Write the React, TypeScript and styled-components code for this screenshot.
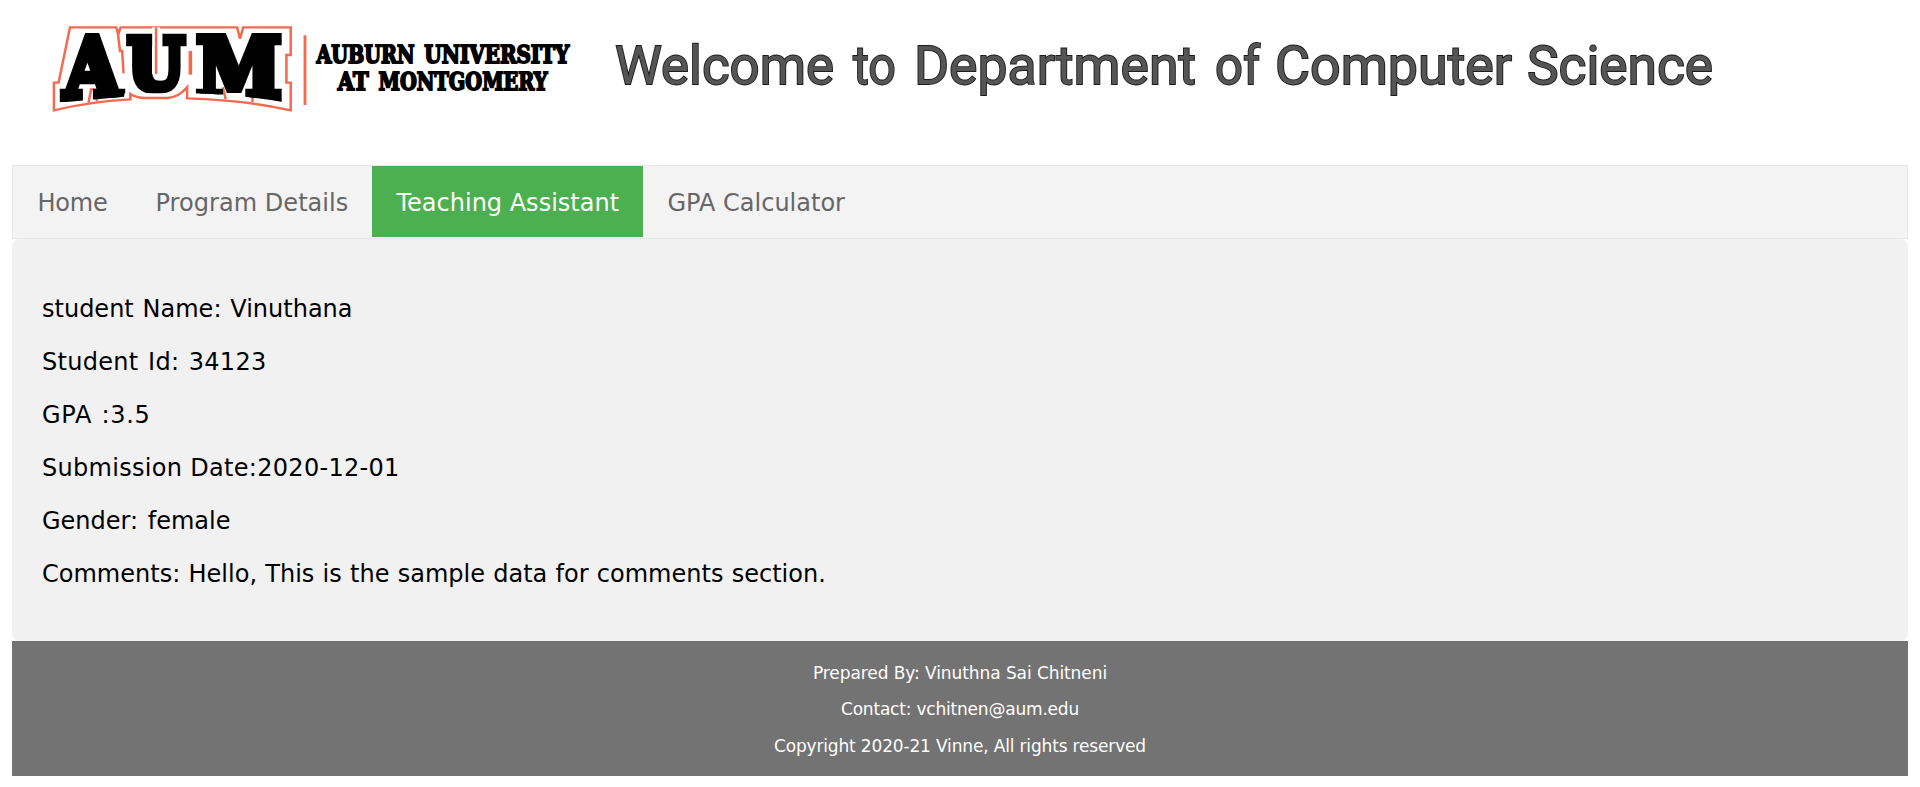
import React from "react";
import styled, { createGlobalStyle } from "styled-components";

const GlobalStyle = createGlobalStyle`
  * { box-sizing: border-box; }
  body {
    margin: 0;
    background: #fff;
    font-family: Verdana, "DejaVu Sans", sans-serif;
    overflow: hidden;
  }
`;

const Page = styled.div`
  width: 100%;
  height: 787px;
  padding: 0 12px;
`;

const Header = styled.header`
  display: flex;
  height: 165px;
  padding-left: 18px;
`;

const Nav = styled.nav`
  display: flex;
  height: 74px;
  background: #f3f3f3;
  border: 1px solid #e7e7e7;
`;

const NavItem = styled.a<{ $active?: boolean; $width: number; $spacing?: number }>`
  width: ${(p) => p.$width}px;
  height: 71px;
  padding-left: 24.5px;
  line-height: 74px;
  font-size: 24px;
  letter-spacing: ${(p) => p.$spacing ?? 0}px;
  white-space: nowrap;
  color: ${(p) => (p.$active ? "#fff" : "#666")};
  background: ${(p) => (p.$active ? "#4caf50" : "transparent")};
`;

const Panel = styled.main`
  height: 402px;
  padding: 44px 30px 0;
  border-radius: 7px;
  background: #f1f1f1;
`;

const Detail = styled.p<{ $spacing: number; $wordSpacing?: number }>`
  margin: 0;
  height: 53px;
  line-height: 53px;
  font-size: 24px;
  letter-spacing: ${(p) => p.$spacing}px;
  word-spacing: ${(p) => p.$wordSpacing ?? 0}px;
  color: #000;
  white-space: pre;
`;

const Footer = styled.footer`
  height: 135px;
  padding-top: 13.7px;
  background: #737373;
  text-align: center;
`;

const FooterLine = styled.p<{ $spacing: number }>`
  margin: 0;
  height: 36.5px;
  line-height: 36.5px;
  font-size: 17px;
  letter-spacing: ${(p) => p.$spacing}px;
  color: #fff;
`;

const slab = { fontFamily: "DejaVu Serif", fontWeight: 700 };

const Logo = () => (
  <svg width="560" height="140" viewBox="0 0 1568 420" preserveAspectRatio="none">
    <clipPath id="arch">
      <path d="M60 99H720V308Q600 284 450 280H265L263 290L80 308Z" />
    </clipPath>
    <g fill="none" stroke="#f4694f" strokeWidth="7">
      <path d="M112 82H241L248 100L254 82H580L588 116L597 82H730V165H718V248H730V331Q600 300 440 295V262Q415 293 385 294H318Q295 292 281 282V298Q165 305 67 331V248H80Z" />
      <path d="M245 90L252 153H258L262 220M164 308L171 268H180L188 304M540 262L548 298M630 250L622 306" />
      <path d="M449 153V224" strokeWidth="10" />
      <path d="M770 106V315" strokeWidth="8" />
    </g>
    <g fill="#000" stroke="#000" strokeWidth="25" style={slab} clipPath="url(#arch)">
      <text x="95" y="295" fontSize="251" textLength="159" lengthAdjust="spacingAndGlyphs">A</text>
      <text x="274" y="266" fontSize="210" textLength="158" lengthAdjust="spacingAndGlyphs">U</text>
      <text x="466" y="295" fontSize="251" textLength="238" lengthAdjust="spacingAndGlyphs">M</text>
    </g>
    <path d="M353 82V222" stroke="#fff" strokeWidth="22" />
    <path d="M353 82V222" stroke="#f4694f" strokeWidth="7" />
    <g fill="#000" stroke="#000" strokeWidth="5.5" fontSize="70" style={slab}>
      <text x="802" y="188" textLength="275" lengthAdjust="spacingAndGlyphs">AUBURN</text>
      <text x="1104" y="188" textLength="406" lengthAdjust="spacingAndGlyphs">UNIVERSITY</text>
      <text x="862" y="271" textLength="86" lengthAdjust="spacingAndGlyphs">AT</text>
      <text x="976" y="271" textLength="473" lengthAdjust="spacingAndGlyphs">MONTGOMERY</text>
    </g>
  </svg>
);

const titleWords: [string, number, number][] = [
  ["Welcome", 25, 219],
  ["to", 263, 43],
  ["Department", 324, 282],
  ["of", 625, 45],
  ["Computer", 685, 237],
  ["Science", 937, 186],
];

const Title = () => (
  <svg width="1150" height="140" viewBox="0 0 1150 140">
    <g
      fill="#555"
      stroke="#1c1c1c"
      strokeWidth="1.8"
      paintOrder="stroke"
      fontFamily="Roboto"
      fontWeight="400"
      fontSize="53"
    >
      {titleWords.map(([word, x, width]) => (
        <text key={word} x={x} y="83.5" textLength={width} lengthAdjust="spacingAndGlyphs">
          {word}
        </text>
      ))}
    </g>
  </svg>
);

export default function App() {
  return (
    <Page>
      <GlobalStyle />
      <Header>
        <Logo />
        <Title />
      </Header>
      <Nav>
        <NavItem $width={118} $spacing={-0.2}>Home</NavItem>
        <NavItem $width={241} $spacing={0.05}>Program Details</NavItem>
        <NavItem $width={271} $active>Teaching Assistant</NavItem>
        <NavItem $width={226}>GPA Calculator</NavItem>
      </Nav>
      <Panel>
        <Detail $spacing={0} $wordSpacing={1.2}>student Name: Vinuthana</Detail>
        <Detail $spacing={0.3} $wordSpacing={1.5}>Student Id: 34123</Detail>
        <Detail $spacing={0.7} $wordSpacing={1}>GPA :3.5</Detail>
        <Detail $spacing={0.3}>Submission Date:2020-12-01</Detail>
        <Detail $spacing={0} $wordSpacing={2}>Gender: female</Detail>
        <Detail $spacing={0.01} $wordSpacing={0.6}>Comments: Hello, This is the sample data for comments section.</Detail>
      </Panel>
      <Footer>
        <FooterLine $spacing={-0.08}>Prepared By: Vinuthna Sai Chitneni</FooterLine>
        <FooterLine $spacing={-0.2}>Contact: vchitnen@aum.edu</FooterLine>
        <FooterLine $spacing={-0.16}>Copyright 2020-21 Vinne, All rights reserved</FooterLine>
      </Footer>
    </Page>
  );
}
